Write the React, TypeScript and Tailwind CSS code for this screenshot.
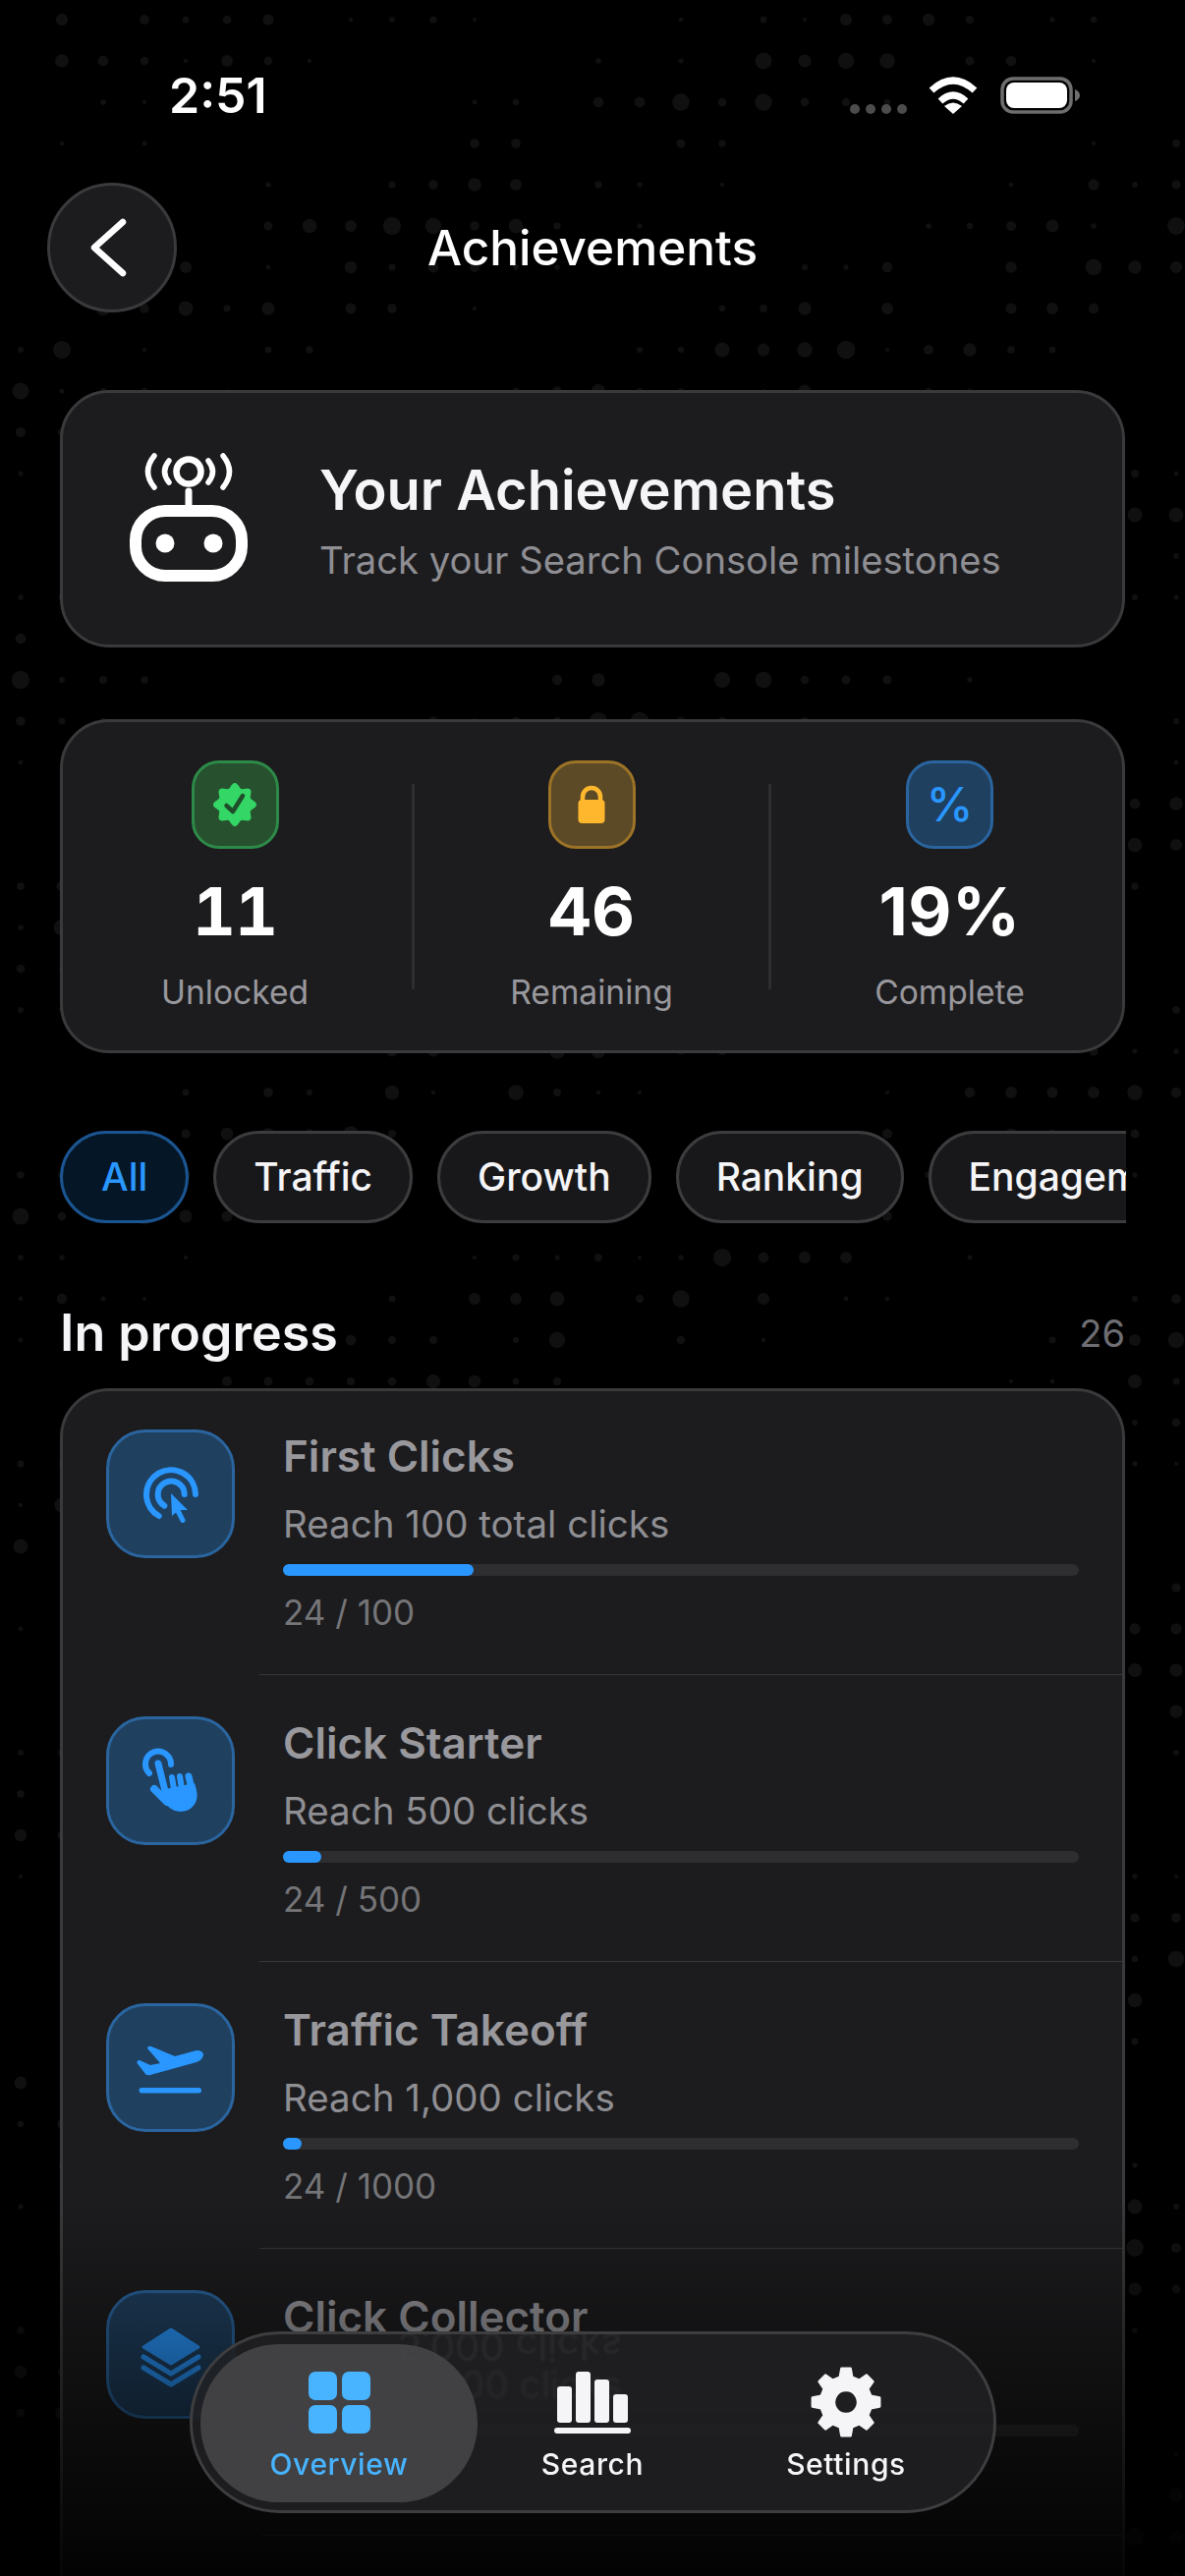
import type { ReactNode } from "react";

// dotted backdrop, sizes come from a small fixed noise so every run looks the same
const noise = (x: number, y: number) => {
  const s = Math.sin(x * 12.9898 + y * 78.233) * 43758.5453;
  return s - Math.floor(s);
};

const dots: { x: number; y: number; r: number }[] = [];
for (let j = 0; j < 63; j++) {
  for (let i = 0; i < 29; i++) {
    const n = noise(i, j);
    const band = 0.55 + 0.45 * Math.sin(j * 0.9 + i * 0.35);
    const r = n * band * 9.5;
    if (r > 2) dots.push({ x: 21 + i * 42, y: 20 + j * 42, r });
  }
}

const gearPath = () => {
  const pts: string[] = [];
  const teeth = 8;
  for (let t = 0; t < teeth; t++) {
    const a = (t * Math.PI * 2) / teeth - Math.PI / 2;
    const step = Math.PI / teeth;
    const p = (r: number, o: number) =>
      `${(36 + r * Math.cos(a + o)).toFixed(2)} ${(36 + r * Math.sin(a + o)).toFixed(2)}`;
    pts.push(p(26, -step * 0.62), p(34.5, -step * 0.34), p(34.5, step * 0.34), p(26, step * 0.62));
  }
  return `M${pts.join("L")}Z M36 24a12 12 0 1 0 0.01 0Z`;
};

const badgePath = () => {
  const pts: string[] = [];
  for (let i = 0; i < 96; i++) {
    const a = (i / 96) * Math.PI * 2;
    const r = 19.6 + 2.4 * Math.cos(8 * a);
    pts.push(`${(24 + r * Math.sin(a)).toFixed(2)} ${(24 - r * Math.cos(a)).toFixed(2)}`);
  }
  return `M${pts.join("L")}Z`;
};

const Backdrop = () => (
  <svg className="absolute left-0 top-0" width="1206" height="2622" viewBox="0 0 1206 2622">
    {dots.map((d) => (
      <circle key={`${d.x}-${d.y}`} cx={d.x} cy={d.y} r={d.r} fill="#101010" />
    ))}
  </svg>
);

const StatusBar = () => (
  <div className="flex h-[186px] items-start pl-[172px] pr-[106px] pt-[67px]">
    <span className="text-[50px] font-semibold leading-[60px] text-white">2:51</span>
    <div className="ml-auto mt-[11px] flex h-[38px] items-center">
      <div className="flex gap-[6px] self-end">
        <span className="h-[10px] w-[10px] rounded-full bg-[#4c4c4c]" />
        <span className="h-[10px] w-[10px] rounded-full bg-[#4c4c4c]" />
        <span className="h-[10px] w-[10px] rounded-full bg-[#4c4c4c]" />
        <span className="h-[10px] w-[10px] rounded-full bg-[#4c4c4c]" />
      </div>
      <svg className="ml-[22px]" width="50" height="38" viewBox="0 0 50 38" fill="none">
        <path d="M3 14Q25 -6 47 14" stroke="#fff" strokeWidth="7" />
        <path d="M12 25Q25 13 38 25" stroke="#fff" strokeWidth="7" />
        <path d="M25 38L16 30Q25 23 34 30Z" fill="#fff" />
      </svg>
      <svg className="ml-[23px]" width="82" height="38" viewBox="0 0 82 38" fill="none">
        <rect x="2" y="2" width="70" height="34" rx="11" stroke="#6e6e6e" strokeWidth="3.5" />
        <rect x="6" y="6" width="62" height="26" rx="8" fill="#fff" />
        <path d="M76 13Q81 15 81 19Q81 23 76 25Z" fill="#6e6e6e" />
      </svg>
    </div>
  </div>
);

const Header = () => (
  <div className="grid grid-cols-[132px_1fr_132px] items-center px-[48px]">
    <button className="flex h-[132px] w-[132px] items-center justify-center rounded-full border-[3px] border-[#3a3a3c] bg-[#1c1c1e]">
      <svg className="-ml-[9px]" width="40" height="64" viewBox="0 0 40 64" fill="none">
        <path d="M35 6L6 32L35 58" stroke="#fff" strokeWidth="6.5" strokeLinecap="round" strokeLinejoin="round" />
      </svg>
    </button>
    <h1 className="text-center text-[49.5px] font-medium leading-[60px] text-white">Achievements</h1>
    <span />
  </div>
);

const HeroCard = () => (
  <section className="mx-[61px] mt-[79px] flex h-[262px] items-center rounded-[50px] border-[3px] border-[#3a3a3c] bg-[#1c1c1e] pl-[58px]">
    <svg className="-mt-[4px] shrink-0" width="140" height="140" viewBox="0 0 140 140" fill="none">
      <rect x="16" y="64" width="108" height="66" rx="30" stroke="#fff" strokeWidth="12" />
      <circle cx="46" cy="97" r="9.5" fill="#fff" />
      <circle cx="95" cy="97" r="9.5" fill="#fff" />
      <path d="M70 44V58" stroke="#fff" strokeWidth="7" strokeLinecap="round" />
      <circle cx="70" cy="24" r="12.5" stroke="#fff" strokeWidth="6.5" />
      <g stroke="#fff" strokeWidth="5.5" strokeLinecap="round">
        <path d="M50 13Q41 24 50 35" />
        <path d="M35 8Q22 24 35 40" />
        <path d="M90 13Q99 24 90 35" />
        <path d="M105 8Q118 24 105 40" />
      </g>
    </svg>
    <div className="ml-[63px] mt-[3px]">
      <h2 className="text-[56px] font-semibold leading-[68px] text-[#f5f5f7]">Your Achievements</h2>
      <p className="mt-[12px] text-[38.2px] leading-[50px] text-[#8e8e93]">Track your Search Console milestones</p>
    </div>
  </section>
);

const Stat = ({
  tile,
  value,
  label,
  className,
  valueClass,
}: {
  tile: ReactNode;
  value: string;
  label: string;
  className: string;
  valueClass: string;
}) => (
  <div className={`flex flex-col items-center pt-[39px] ${className}`}>
    {tile}
    <div className={`mt-[23px] text-[68px] font-bold leading-[80px] text-white ${valueClass}`}>{value}</div>
    <div className="mt-[21px] text-[33.6px] leading-[44px] text-[#98989d]">{label}</div>
  </div>
);

const StatsCard = () => (
  <section className="mx-[61px] mt-[73px] flex h-[340px] rounded-[50px] border-[3px] border-[#3a3a3c] bg-[#1c1c1e]">
    <Stat
      className="w-[355px] pr-[5px]"
      valueClass="tabular-nums tracking-[-1px]"
      value="11"
      label="Unlocked"
      tile={
        <div className="flex h-[90px] w-[89px] items-center justify-center rounded-[28px] border-[3px] border-[#2d8a48] bg-[#27502f]">
          <svg width="48" height="48" viewBox="0 0 48 48">
            <path d={badgePath()} fill="#34d765" />
            <path d="M15.5 25L22 31L32 15" fill="none" stroke="#1f4d2b" strokeWidth="4.5" strokeLinecap="round" strokeLinejoin="round" />
          </svg>
        </div>
      }
    />
    <div className="mt-[63px] h-[209px] w-[3px] bg-[#2e2e30]" />
    <Stat
      className="w-[360px]"
      valueClass="tabular-nums"
      value="46"
      label="Remaining"
      tile={
        <div className="flex h-[90px] w-[89px] items-center justify-center rounded-[28px] border-[3px] border-[#9c7327] bg-[#5c4a26]">
          <svg width="28" height="40" viewBox="0 0 28 40" fill="none">
            <path d="M5 18V12a9 9 0 0 1 18 0V18" stroke="#ffb82e" strokeWidth="4.5" />
            <rect x="0.5" y="15" width="27" height="24" rx="4" fill="#ffb82e" />
          </svg>
        </div>
      }
    />
    <div className="mt-[63px] h-[209px] w-[3px] bg-[#2e2e30]" />
    <Stat
      className="flex-1 pl-[6px]"
      valueClass="tracking-[0.5px]"
      value="19%"
      label="Complete"
      tile={
        <div className="flex h-[90px] w-[89px] items-center justify-center rounded-[28px] border-[3px] border-[#2a659f] bg-[#20405f]">
          <span className="text-[48px] font-medium leading-[56px] text-[#2997ff]">%</span>
        </div>
      }
    />
  </section>
);

const chips = ["Traffic", "Growth", "Ranking", "Engagement"];

const Chips = () => (
  <div className="ml-[61px] mt-[79px] flex w-[1085px] gap-[25px] overflow-hidden">
    <span className="flex h-[94px] shrink-0 items-center rounded-[47px] border-[3px] border-[#1b5490] bg-[#051626] px-[39px] text-[39px] font-medium text-[#2997ff]">
      All
    </span>
    {chips.map((c) => (
      <span
        key={c}
        className="flex h-[94px] shrink-0 items-center rounded-[47px] border-[3px] border-[#3c3c3e] bg-[#18181a] px-[38px] text-[39px] font-medium text-[#f5f5f7]"
      >
        {c}
      </span>
    ))}
  </div>
);

const clicksIcon = (
  <>
    <g fill="none" stroke="#2997ff" strokeWidth="6" strokeLinecap="round">
      <path d="M23.7 58A25 25 0 1 1 61 36" />
      <path d="M29.3 47.7A13.5 13.5 0 1 1 49.7 36" />
      <path d="M42.7 52L48 62.5" strokeWidth="5" />
    </g>
    <path d="M36 35L53 52L44 52L37 58Z" fill="#2997ff" />
  </>
);

const handIcon = (
  <>
    <g fill="none" stroke="#2997ff" strokeLinecap="round">
      <path d="M14 28A13 13 0 1 1 36 19" strokeWidth="6" />
      <path d="M23 18L30 46" strokeWidth="7" />
      <path d="M19 44L32 57" strokeWidth="8" />
      <path d="M37 32L39 44" strokeWidth="6" />
      <path d="M45 31L47 44" strokeWidth="6" />
      <path d="M54 31L57 44" strokeWidth="7" />
    </g>
    <path d="M30 44L60 38Q64 50 62 55Q58 67 45 67Q36 67 28 56Z" fill="#2997ff" />
  </>
);

const planeIcon = (
  <>
    <path
      d="M69 22Q68 18 62 18L40 24L16 14Q12 13 12 16L25 31L15 33L4 28Q1 28 1.5 31L10 42Q12 44 15 43L62 30Q69 27 69 22Z"
      fill="#2997ff"
    />
    <rect x="3.5" y="56" width="63.5" height="5.5" rx="2.75" fill="#2997ff" />
  </>
);

const layersIcon = (
  <>
    <path d="M36 10L64 28L36 45L8 28Z" fill="#2997ff" stroke="#2997ff" strokeWidth="3" strokeLinejoin="round" />
    <g fill="none" stroke="#2997ff" strokeWidth="5" strokeLinecap="round" strokeLinejoin="round">
      <path d="M8 38L36 55L64 38" />
      <path d="M8 49L36 66L64 49" />
    </g>
  </>
);

const rows = [
  { title: "First Clicks", desc: "Reach 100 total clicks", count: "24 / 100", fill: 194, icon: clicksIcon },
  { title: "Click Starter", desc: "Reach 500 clicks", count: "24 / 500", fill: 39, icon: handIcon },
  { title: "Traffic Takeoff", desc: "Reach 1,000 clicks", count: "24 / 1000", fill: 19, icon: planeIcon },
  { title: "Click Collector", desc: "Reach 5,000 clicks", count: "24 / 5000", fill: 14, icon: layersIcon },
];

const AchievementRow = ({ row }: { row: (typeof rows)[number] }) => (
  <div className="flex h-[292px] pl-[44px] first:-mt-[3px]">
    <div className="mt-[42px] flex h-[131px] w-[131px] shrink-0 items-center justify-center rounded-[40px] border-[3px] border-[#2a659f] bg-[#20405f]">
      <svg width="72" height="72" viewBox="0 0 72 72">
        {row.icon}
      </svg>
    </div>
    <div className="ml-[25px] flex-1 border-b border-[#38383a] pl-[24px] pr-[44px] pt-[41px]">
      <h3 className="text-[44px] font-semibold leading-[56px] text-[#98989d]">{row.title}</h3>
      <p className="mt-[16px] text-[38.5px] leading-[50px] text-[#8e8e93]">{row.desc}</p>
      <div className="mt-[16px] h-[12px] rounded-full bg-[#2e2e30]">
        <div className="h-full rounded-full bg-[#2997ff]" style={{ width: row.fill }} />
      </div>
      <p className="mt-[15px] text-[35px] leading-[44px] text-[#757578]">{row.count}</p>
    </div>
  </div>
);

const BottomNav = () => (
  <nav className="absolute left-[193px] top-[2373px] flex h-[185px] w-[821px] overflow-hidden rounded-[92px] border-[3px] border-[#3e3e40] bg-[#212123]/85 pl-[8px] pt-[10px] backdrop-blur-[1.5px]">
    <div className="absolute left-[208px] top-[-11px] scale-y-[-1] text-[40px] leading-[46px] text-[#2a2a2c] blur-[1px]">5,000 clicks</div>
    <div className="relative flex h-[161px] w-[282px] flex-col items-center rounded-[80px] bg-[#464648]/90 pt-[23px]">
      <div className="grid h-[72px] grid-cols-[29px_29px] content-center gap-[5px]">
        <span className="h-[29px] rounded-[7px] bg-[#48b4ff]" />
        <span className="h-[29px] rounded-[7px] bg-[#48b4ff]" />
        <span className="h-[29px] rounded-[7px] bg-[#48b4ff]" />
        <span className="h-[29px] rounded-[7px] bg-[#48b4ff]" />
      </div>
      <span className="mt-[7px] text-[30px] font-medium leading-[40px] tracking-[0.6px] text-[#48b4ff]">Overview</span>
    </div>
    <div className="relative flex h-[161px] w-[234px] flex-col items-center pt-[23px]">
      <svg width="78" height="72" viewBox="0 0 78 72" fill="#f5f5f7">
        <rect x="3" y="20" width="15" height="37" rx="3" />
        <rect x="22" y="5" width="15" height="52" rx="3" />
        <rect x="41" y="13" width="15" height="44" rx="3" />
        <rect x="60" y="28" width="15" height="29" rx="3" />
        <rect x="0" y="62" width="78" height="6" rx="3" />
      </svg>
      <span className="mt-[7px] text-[30px] font-medium leading-[40px] tracking-[0.6px] text-[#f5f5f7]">Search</span>
    </div>
    <div className="relative flex h-[161px] w-[282px] flex-col items-center pt-[23px]">
      <svg width="72" height="72" viewBox="0 0 72 72">
        <path d={gearPath()} fill="#f5f5f7" stroke="#f5f5f7" strokeWidth="2.5" strokeLinejoin="round" fillRule="evenodd" />
      </svg>
      <span className="mt-[7px] text-[30px] font-medium leading-[40px] tracking-[0.6px] text-[#f5f5f7]">Settings</span>
    </div>
  </nav>
);

export default function App() {
  return (
    <div className="relative h-[2622px] w-[1206px] overflow-hidden bg-black font-['Inter',sans-serif]">
      <Backdrop />
      <div className="relative">
        <StatusBar />
        <Header />
        <HeroCard />
        <StatsCard />
        <Chips />
        <div className="mx-[61px] mt-[82px] flex items-center justify-between">
          <h2 className="text-[52px] font-semibold leading-[60px] text-[#f5f5f7]">In progress</h2>
          <span className="text-[38px] text-[#6e6e73]">26</span>
        </div>
        <section className="mx-[61px] mt-[26px] h-[1400px] overflow-hidden rounded-[50px] border-[3px] border-[#3a3a3c] bg-[#1c1c1e]">
          {rows.map((row) => (
            <AchievementRow key={row.title} row={row} />
          ))}
        </section>
      </div>
      <div className="absolute left-0 top-[2240px] h-[382px] w-full bg-gradient-to-b from-transparent via-[#0000004d] via-[31%] to-[#000000e6]" />
      <BottomNav />
    </div>
  );
}
